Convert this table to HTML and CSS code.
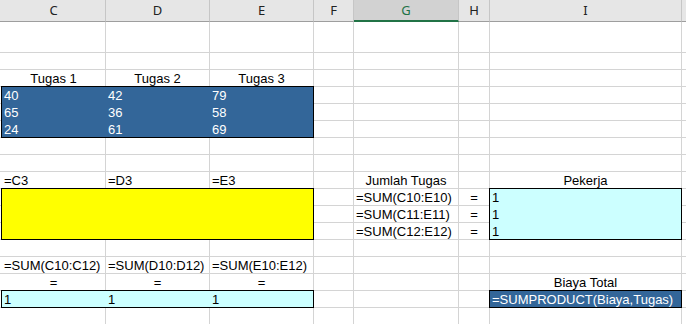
FILE: index.html
```html
<!DOCTYPE html>
<html lang="id">
<head>
    <meta charset="UTF-8">
    <meta name="viewport" content="width=device-width, initial-scale=1.0">
    <title>Penugasan Pekerja</title>
    <link rel="stylesheet" href="styles.css">
</head>
<body>
    <div class="sheet">
        <!-- column headers -->
        <div class="col-head edge"></div>
        <div class="col-head">C</div>
        <div class="col-head">D</div>
        <div class="col-head">E</div>
        <div class="col-head">F</div>
        <div class="col-head selected">G</div>
        <div class="col-head">H</div>
        <div class="col-head">I</div>
        <div class="col-head"></div>

        <!-- row 1 -->
        <div class="cell edge"></div><div class="cell"></div><div class="cell"></div><div class="cell"></div><div class="cell"></div><div class="cell"></div><div class="cell"></div><div class="cell"></div><div class="cell"></div>
        <!-- row 2 -->
        <div class="cell edge"></div><div class="cell"></div><div class="cell"></div><div class="cell"></div><div class="cell"></div><div class="cell"></div><div class="cell"></div><div class="cell"></div><div class="cell"></div>

        <!-- row 3: task titles -->
        <div class="cell edge"></div>
        <div class="cell center">Tugas 1</div>
        <div class="cell center">Tugas 2</div>
        <div class="cell center">Tugas 3</div>
        <div class="cell"></div><div class="cell"></div><div class="cell"></div><div class="cell"></div><div class="cell"></div>

        <!-- rows 4-6: cost table -->
        <div class="cell edge"></div>
        <div class="block block-costs wide tall">
            <span>40</span><span>42</span><span>79</span>
            <span>65</span><span>36</span><span>58</span>
            <span>24</span><span>61</span><span>69</span>
        </div>
        <div class="cell"></div><div class="cell"></div><div class="cell"></div><div class="cell"></div><div class="cell"></div>
        <div class="cell edge"></div>
        <div class="cell"></div><div class="cell"></div><div class="cell"></div><div class="cell"></div><div class="cell"></div>
        <div class="cell edge"></div>
        <div class="cell"></div><div class="cell"></div><div class="cell"></div><div class="cell"></div><div class="cell"></div>

        <!-- rows 7-8 -->
        <div class="cell edge"></div><div class="cell"></div><div class="cell"></div><div class="cell"></div><div class="cell"></div><div class="cell"></div><div class="cell"></div><div class="cell"></div><div class="cell"></div>
        <div class="cell edge"></div><div class="cell"></div><div class="cell"></div><div class="cell"></div><div class="cell"></div><div class="cell"></div><div class="cell"></div><div class="cell"></div><div class="cell"></div>

        <!-- row 9 -->
        <div class="cell edge"></div>
        <div class="cell">=C3</div>
        <div class="cell">=D3</div>
        <div class="cell">=E3</div>
        <div class="cell"></div>
        <div class="cell center">Jumlah Tugas</div>
        <div class="cell"></div>
        <div class="cell center">Pekerja</div>
        <div class="cell"></div>

        <!-- rows 10-12: assignment variables and constraints -->
        <div class="cell edge"></div>
        <div class="block block-vars wide tall"></div>
        <div class="cell"></div>
        <div class="cell">=SUM(C10:E10)</div>
        <div class="cell center">=</div>
        <div class="block block-limit tall">
            <span>1</span><span>1</span><span>1</span>
        </div>
        <div class="cell"></div>

        <div class="cell edge"></div>
        <div class="cell"></div>
        <div class="cell">=SUM(C11:E11)</div>
        <div class="cell center">=</div>
        <div class="cell"></div>

        <div class="cell edge"></div>
        <div class="cell"></div>
        <div class="cell">=SUM(C12:E12)</div>
        <div class="cell center">=</div>
        <div class="cell"></div>

        <!-- row 13 -->
        <div class="cell edge"></div><div class="cell"></div><div class="cell"></div><div class="cell"></div><div class="cell"></div><div class="cell"></div><div class="cell"></div><div class="cell"></div><div class="cell"></div>

        <!-- row 14 -->
        <div class="cell edge"></div>
        <div class="cell">=SUM(C10:C12)</div>
        <div class="cell">=SUM(D10:D12)</div>
        <div class="cell">=SUM(E10:E12)</div>
        <div class="cell"></div><div class="cell"></div><div class="cell"></div><div class="cell"></div><div class="cell"></div>

        <!-- row 15 -->
        <div class="cell edge"></div>
        <div class="cell center">=</div>
        <div class="cell center">=</div>
        <div class="cell center">=</div>
        <div class="cell"></div><div class="cell"></div><div class="cell"></div>
        <div class="cell center">Biaya Total</div>
        <div class="cell"></div>

        <!-- row 16 -->
        <div class="cell edge"></div>
        <div class="block block-limit wide">
            <span>1</span><span>1</span><span>1</span>
        </div>
        <div class="cell"></div><div class="cell"></div><div class="cell"></div>
        <div class="block block-total">=SUMPRODUCT(Biaya,Tugas)</div>
        <div class="cell"></div>

        <!-- row 17 -->
        <div class="cell edge"></div><div class="cell"></div><div class="cell"></div><div class="cell"></div><div class="cell"></div><div class="cell"></div><div class="cell"></div><div class="cell"></div><div class="cell"></div>
    </div>
</body>
</html>
```

FILE: styles.css
```css
:root {
    --head-bg: #e6e6e6;
    --head-selected: #d2d2d2;
    --head-line: #c6c6c6;
    --head-bottom: #9e9e9e;
    --accent-green: #217346;
    --grid-line: #d4d4d4;
    --fill-blue: #336699;
    --fill-yellow: #ffff00;
    --fill-cyan: #ccffff;
}

* {
    margin: 0;
    padding: 0;
    box-sizing: border-box;
}

body {
    background: #fff;
    color: #000;
    font-family: "Liberation Sans", Arial, sans-serif;
    font-size: 13px;
    overflow: hidden;
}

.sheet {
    display: grid;
    grid-template-columns: 2px 104px 104px 104px 40px 105px 31px 192px 1fr;
    grid-template-rows: 22px 31px repeat(16, 17px);
    width: 100vw;
}

.col-head {
    background: var(--head-bg);
    border-right: 1px solid var(--head-line);
    border-bottom: 1px solid var(--head-bottom);
    font-family: "Noto Sans", sans-serif;
    font-size: 13px;
    line-height: 21px;
    text-align: center;
    color: #222;
}

.col-head.edge {
    border-right: none;
}

.col-head.selected {
    background: var(--head-selected);
    border-bottom: 2px solid var(--accent-green);
    color: var(--accent-green);
}

.cell {
    border-right: 1px solid var(--grid-line);
    border-bottom: 1px solid var(--grid-line);
    padding: 0 2px;
    line-height: 17px;
    white-space: nowrap;
}

.cell.edge {
    border-right: none;
    padding: 0;
}

.center {
    text-align: center;
}

/* bordered ranges: pulled up/left by 1px so the black frame sits on the gridlines */
.block {
    margin: -1px 0 0 -1px;
    border: 1px solid #000;
    z-index: 1;
    line-height: 17px;
    white-space: nowrap;
}

.wide {
    grid-column: span 3;
}

.tall {
    grid-row: span 3;
}

.block span {
    padding: 0 2px;
}

.block-costs {
    display: grid;
    grid-template-columns: 104px 104px 1fr;
    grid-auto-rows: 17px;
    background: var(--fill-blue);
    color: #fff;
}

.block-vars {
    background: var(--fill-yellow);
}

.block-limit {
    display: grid;
    grid-auto-rows: 17px;
    background: var(--fill-cyan);
}

.block-limit.wide {
    grid-template-columns: 104px 104px 1fr;
}

.block-total {
    background: var(--fill-blue);
    color: #fff;
    padding: 0 2px;
}
```
